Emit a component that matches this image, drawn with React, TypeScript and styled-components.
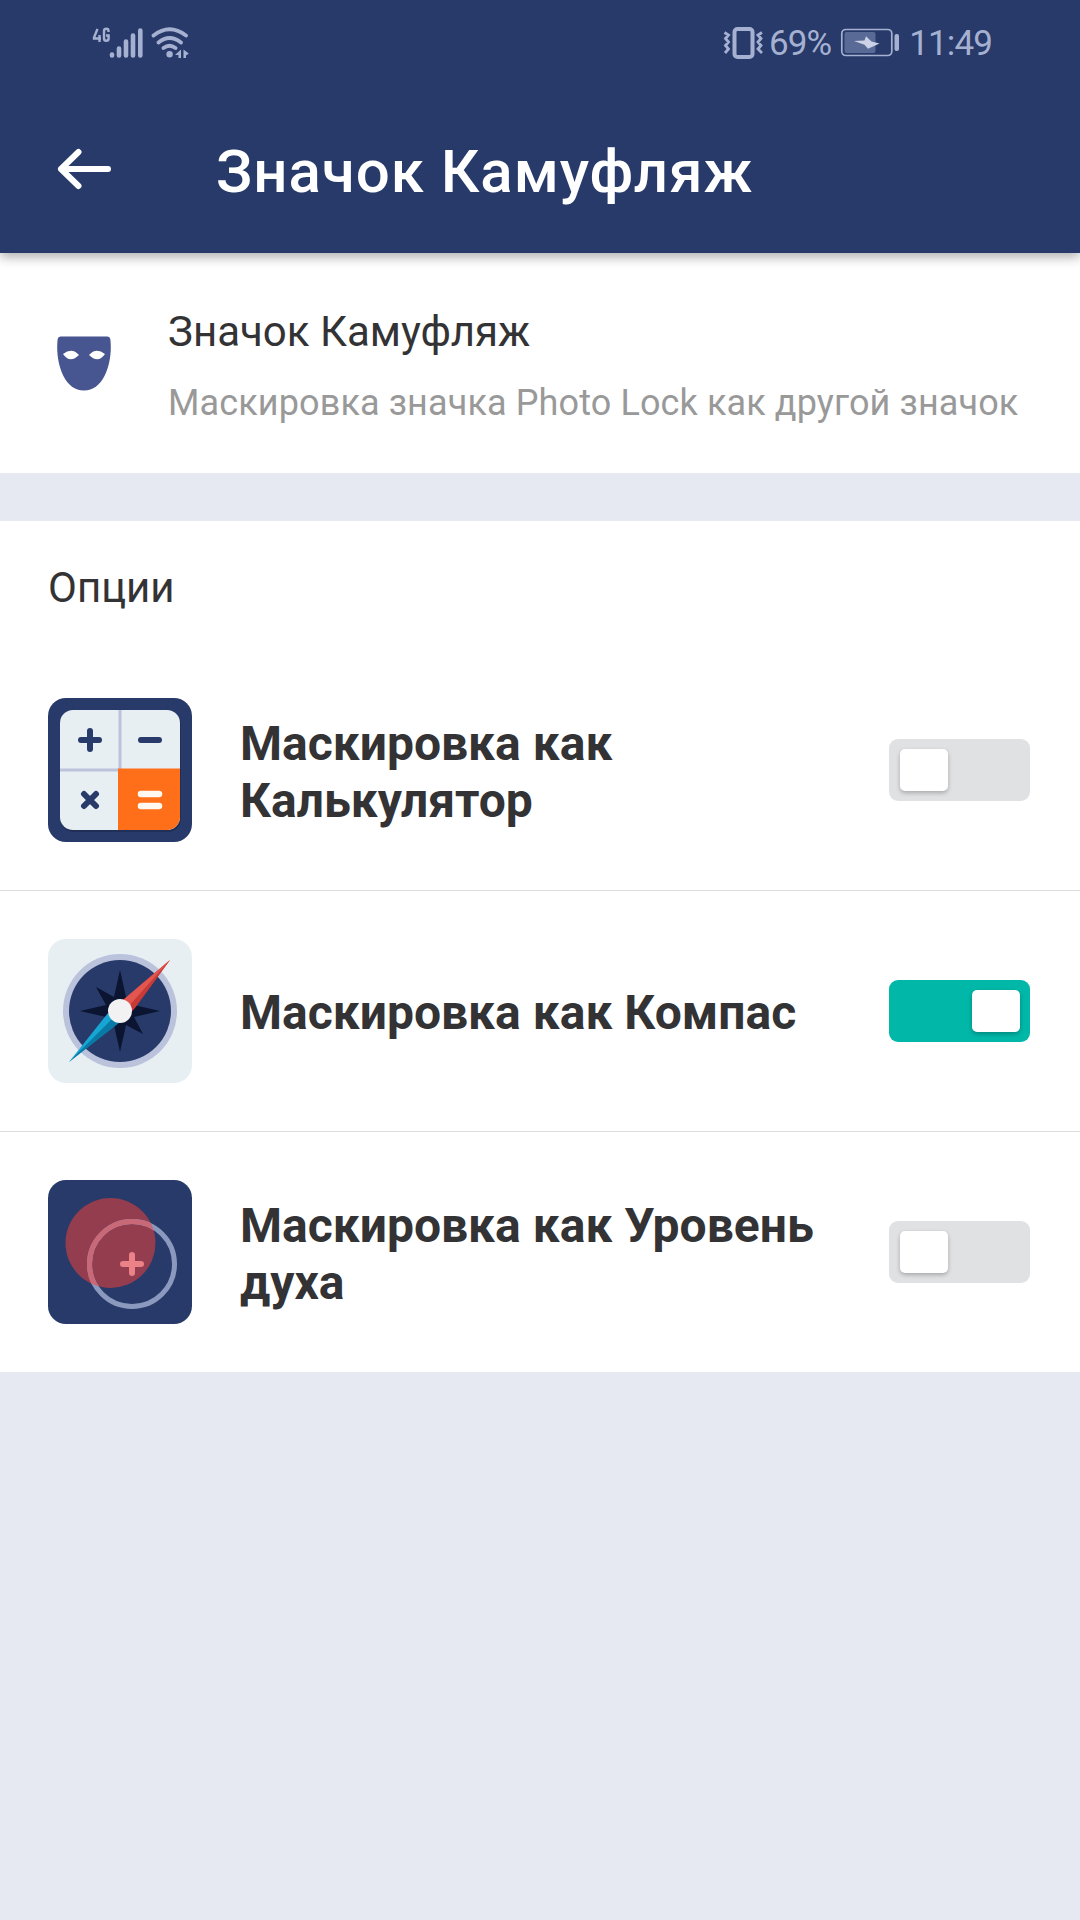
import React, { useState } from "react";
import styled, { createGlobalStyle } from "styled-components";

const GlobalStyle = createGlobalStyle`
  body { margin: 0; background: #e6e9f2; font-family: Roboto, "Noto Sans", sans-serif; }
  * { box-sizing: border-box; }
  svg { display: block; flex: none; }
`;

const Screen = styled.main`
  width: 1080px;
  height: 1920px;
  display: flex;
  flex-direction: column;
  background: #e6e9f2;
  overflow: hidden;
`;

const Header = styled.header`
  height: 253px;
  flex: none;
  background: #273a69;
  box-shadow: 0 4px 11px rgba(0, 0, 0, 0.32);
  z-index: 1;
`;

const StatusBar = styled.div`
  height: 86px;
  padding: 0 88px 0 92px;
  display: flex;
  justify-content: space-between;
  align-items: center;
  color: #a6b1d2;
`;

const StatusGroup = styled.div`
  display: flex;
  align-items: center;
`;

const StatusText = styled.span<{ $left: number }>`
  font-size: 35px;
  line-height: 42px;
  letter-spacing: -0.9px;
  margin-left: ${(p) => p.$left}px;
  padding-top: 2px;
`;

const BatterySlot = styled.span`
  margin-left: 9px;
`;

const AppBar = styled.div`
  height: 166px;
  display: flex;
  align-items: center;
  padding-left: 57px;
`;

const Title = styled.h1`
  margin: 6px 0 0 105px;
  color: #fff;
  font-size: 60px;
  line-height: 70px;
  font-weight: 500;
  letter-spacing: 0.95px;
  white-space: nowrap;
`;

const BackButton = styled.button`
  border: 0;
  padding: 0;
  background: none;
  height: 44px;
`;

const Summary = styled.section`
  height: 220px;
  flex: none;
  display: flex;
  align-items: flex-start;
  background: #fff;
  padding: 53px 0 0 56px;
`;

const SummaryIcon = styled.div`
  width: 56px;
  padding-top: 29px;
`;

const SummaryText = styled.div`
  margin-left: 56px;
  white-space: nowrap;
`;

const SummaryTitle = styled.h2`
  margin: 0;
  font-size: 42px;
  line-height: 52px;
  font-weight: 400;
  color: #333335;
`;

const SummaryNote = styled.p`
  margin: 22px 0 0;
  font-size: 36px;
  line-height: 46px;
  letter-spacing: 0.12px;
  color: #999;
`;

const Options = styled.section`
  margin-top: 48px;
  background: #fff;
`;

const OptionsTitle = styled.h3`
  margin: 0;
  height: 129px;
  padding: 42px 48px 0;
  font-size: 42px;
  line-height: 50px;
  font-weight: 400;
  color: #333335;
`;

const Row = styled.div<{ $last: boolean }>`
  height: ${(p) => (p.$last ? 240 : 241)}px;
  border-bottom: ${(p) => (p.$last ? "0" : "1px solid #dcdddf")};
  display: flex;
  align-items: center;
  padding: 0 50px 0 48px;
`;

const Label = styled.div`
  flex: 1;
  margin: 5px 48px 0;
  font-size: 48px;
  line-height: 56.5px;
  font-weight: 700;
  color: #333335;
  white-space: pre-line;
`;

const Track = styled.button<{ $on: boolean }>`
  width: 141px;
  height: 62px;
  border: 0;
  border-radius: 9px;
  padding: 0 10px 0 11px;
  display: flex;
  align-items: center;
  justify-content: ${(p) => (p.$on ? "flex-end" : "flex-start")};
  background: ${(p) => (p.$on ? "#00b7a8" : "#e0e1e3")};
`;

const Thumb = styled.span`
  width: 48px;
  height: 42px;
  border-radius: 5px;
  background: #fff;
  box-shadow: 0 2px 4px rgba(0, 0, 0, 0.25);
`;

function SignalIcon() {
  return (
    <svg width="57" height="36" viewBox="92 24 57 36">
      <g fill="none" stroke="#a6b1d2" strokeWidth="2.4">
        <path d="M97.500 28L94 36.500V37.500H101M99.500 34V41" />
        <path d="M108.500 31V30Q108.500 27.800 106.500 27.800Q104 27.800 104 30V37.500Q104 39.800 106.300 39.800Q108.600 39.800 108.600 37.500V34.500H106" />
      </g>
      <g stroke="#a6b1d2" strokeWidth="4.600" strokeLinecap="round">
        <path d="M112 53.500V54.500M119 47.500V54.500M126 40.500V54.500M133 34.500V54.500M140.300 29.500V54.500" />
      </g>
    </svg>
  );
}

function WifiIcon() {
  return (
    <svg width="41" height="36" viewBox="149 24 41 36">
      <g fill="none" stroke="#a6b1d2" strokeWidth="3.800" strokeLinecap="round">
        <path d="M153.500 34.500Q169.500 22 186 34.500M158.500 41.500Q169.500 32.500 181 41.500M163.500 47Q169.500 42.500 175.500 47" />
      </g>
      <circle cx="169.600" cy="53.300" r="3.200" fill="#a6b1d2" />
      <path d="M181 48.500V57H178.500V54H175L181 48.500ZM183.500 48.500L188.800 52.500L186 54.500V57H183.500Z" fill="#a6b1d2" />
    </svg>
  );
}

function VibrateIcon() {
  return (
    <svg width="42" height="34" viewBox="722 25 42 34">
      <rect x="734.500" y="28" width="18" height="28" rx="3" fill="none" stroke="#a6b1d2" strokeWidth="4" />
      <path
        d="M724.500 31.500L728.500 34L725.500 37.500L728.500 41L725.500 44.500L728.500 48L725 52M762 31.500L758 34L761 37.500L758 41L761 44.500L758 48L762 52"
        fill="none"
        stroke="#a6b1d2"
        strokeWidth="2.800"
      />
    </svg>
  );
}

function BatteryIcon() {
  return (
    <svg width="59" height="30" viewBox="840 28 59 30">
      <rect x="841.800" y="29.500" width="50" height="26" rx="4" fill="none" stroke="#a6b1d2" strokeWidth="1.700" />
      <rect x="844.500" y="32" width="31" height="21" rx="2" fill="#5a6a96" />
      <rect x="894.500" y="34" width="4.500" height="17" rx="2" fill="#a6b1d2" />
      <path d="M854 41L864.500 40.500L866 36.300L871.500 41.500L879.500 43.500L868 48.700L864.500 44.800Z" fill="#ccd3e6" />
    </svg>
  );
}

function BackIcon() {
  return (
    <svg width="54" height="44" viewBox="57 147 54 44" fill="none" stroke="#fff" strokeWidth="6" strokeLinecap="round" strokeLinejoin="round">
      <path d="M78.500 152L61 169L78.500 186M61 169H108" />
    </svg>
  );
}

function MaskIcon() {
  return (
    <svg width="56" height="56" viewBox="56 335 56 56">
      <path d="M60.500 336.500H107.500Q110 336.500 110.300 339C113 360 105 390.600 84 390.600C63 390.600 55 360 57.700 339Q58 336.500 60.500 336.500Z" fill="#475590" />
      <path d="M63 354Q72 347 79 355Q70 364 63 354ZM105 354Q96 347 89 355Q98 364 105 354Z" fill="#fff" />
    </svg>
  );
}

function CalculatorIcon() {
  return (
    <svg width="144" height="144" viewBox="0 0 144 144">
      <defs>
        <clipPath id="keys"><rect x="12" y="12" width="120" height="120" rx="13" /></clipPath>
      </defs>
      <rect width="144" height="144" rx="18" fill="#273a69" />
      <rect x="13" y="14" width="120" height="120" rx="13" fill="#202f57" />
      <g clipPath="url(#keys)">
        <path d="M12 12H132V132H12Z" fill="#e8eff2" />
        <path d="M70.500 12H73.500V73.500H12V70.500H70.500Z" fill="#bcc3da" />
        <path d="M70 70.500H132V132H70Z" fill="#ff6f1a" />
      </g>
      <g stroke="#273a69" strokeWidth="6" strokeLinecap="round">
        <path d="M42 33V51M33 42H51M93 42H111M36 96L48 108M48 96L36 108" />
      </g>
      <path d="M93 96H111M93 108H111" stroke="#fff8ef" strokeWidth="6.500" strokeLinecap="round" />
    </svg>
  );
}

function CompassIcon() {
  return (
    <svg width="144" height="144" viewBox="0 0 144 144">
      <rect width="144" height="144" rx="18" fill="#e8eff2" />
      <circle cx="72" cy="72" r="57" fill="#bac2dc" />
      <circle cx="72" cy="72" r="51" fill="#273a69" />
      <path d="M72 31L78 58L86 66L112 72L86 78L95 95L78 86L72 113L66 86L58 78L32 72L58 66L48 48L66 58Z" fill="#0b1431" />
      <path d="M122 21L74 62L84 72Z" fill="#e35650" />
      <path d="M122 21L74 62L84 72L87 69Z" fill="#c83a36" />
      <path d="M122 21L74 62L80 68Z" fill="#e35650" />
      <path d="M21 123L60 74L70 84Z" fill="#17a5d3" />
      <path d="M21 123L65 79L71 84Z" fill="#087aa5" />
      <circle cx="72" cy="72" r="12" fill="#f2f2f3" />
    </svg>
  );
}

function LevelIcon() {
  return (
    <svg width="144" height="144" viewBox="0 0 144 144">
      <defs>
        <clipPath id="bubble"><circle cx="62.500" cy="63" r="45" /></clipPath>
      </defs>
      <rect width="144" height="144" rx="18" fill="#273a69" />
      <circle cx="62.500" cy="63" r="45" fill="#933d4f" />
      <circle cx="84" cy="84" r="42.500" fill="none" stroke="#8b99be" strokeWidth="5" />
      <circle cx="84" cy="84" r="42.500" fill="none" stroke="#c96876" strokeWidth="5" clipPath="url(#bubble)" />
      <path d="M84 75V93M75 84H93" stroke="#ea8288" strokeWidth="6" strokeLinecap="round" />
    </svg>
  );
}

const choices = [
  { label: "Маскировка как\nКалькулятор", Icon: CalculatorIcon },
  { label: "Маскировка как Компас", Icon: CompassIcon },
  { label: "Маскировка как Уровень\nдуха", Icon: LevelIcon },
];

export default function App() {
  const [selected, setSelected] = useState(1);
  return (
    <Screen>
      <GlobalStyle />
      <Header>
        <StatusBar>
          <StatusGroup>
            <SignalIcon />
            <WifiIcon />
          </StatusGroup>
          <StatusGroup>
            <VibrateIcon />
            <StatusText $left={5}>69%</StatusText>
            <BatterySlot><BatteryIcon /></BatterySlot>
            <StatusText $left={10}>11:49</StatusText>
          </StatusGroup>
        </StatusBar>
        <AppBar>
          <BackButton aria-label="Назад"><BackIcon /></BackButton>
          <Title>Значок Камуфляж</Title>
        </AppBar>
      </Header>
      <Summary>
        <SummaryIcon><MaskIcon /></SummaryIcon>
        <SummaryText>
          <SummaryTitle>Значок Камуфляж</SummaryTitle>
          <SummaryNote>Маскировка значка Photo Lock как другой значок</SummaryNote>
        </SummaryText>
      </Summary>
      <Options>
        <OptionsTitle>Опции</OptionsTitle>
        {choices.map(({ label, Icon }, i) => (
          <Row key={label} $last={i === choices.length - 1}>
            <Icon />
            <Label>{label}</Label>
            <Track $on={selected === i} onClick={() => setSelected(selected === i ? -1 : i)} role="switch" aria-checked={selected === i}>
              <Thumb />
            </Track>
          </Row>
        ))}
      </Options>
    </Screen>
  );
}
